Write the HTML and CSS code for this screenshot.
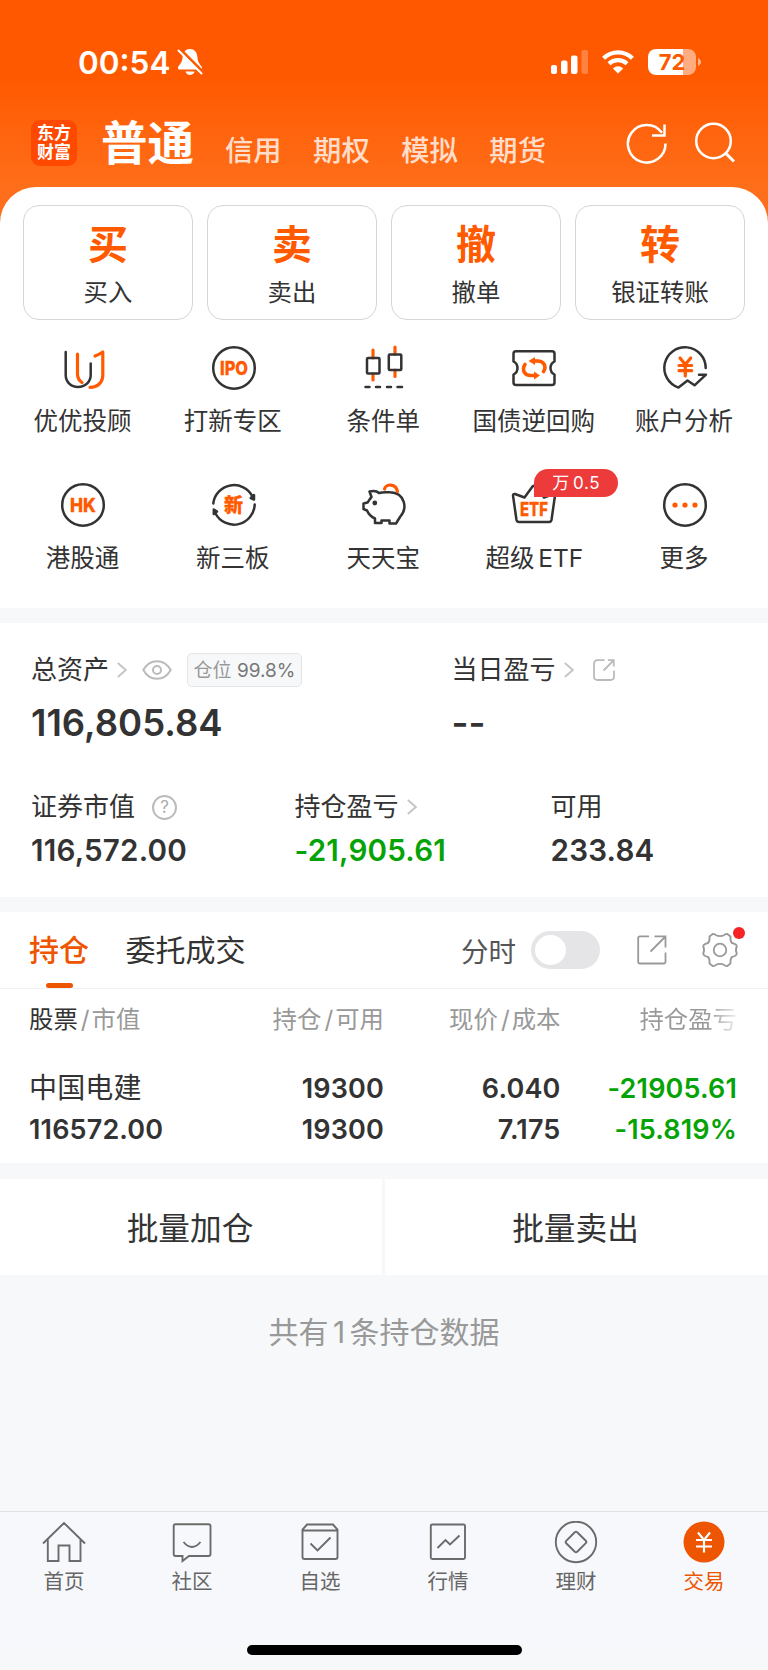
FILE: index.html
```html
<!DOCTYPE html>
<html lang="zh-CN">
<head>
    <meta charset="UTF-8">
    <meta name="viewport" content="width=device-width, initial-scale=1.0">
    <title>交易 - 普通</title>
    <link rel="stylesheet" href="styles.css">
</head>
<body>
    <div class="top">
        <div class="status-bar">
            <span class="time">00:54</span>
            <svg class="bell" width="26" height="28" viewBox="0 0 26 28">
                <path d="M13 1C8.500 1 6 4 5.600 9C5.300 14 3.500 15.500 1.300 18.500C.500 20 1 21.500 2.500 21.500H23.500C25 21.500 25.500 20 24.500 18.500C22.500 15.500 20.700 14 20.400 9C20 4 17.500 1 13 1Z" fill="#fff"/>
                <path d="M8.500 23.500H17.500C16.500 28 9.500 28 8.500 23.500Z" fill="#fff"/>
                <path d="M3 1L27 25" stroke="#ff5900" stroke-width="3"/>
                <path d="M1.500 2.500L24.500 25.500" stroke="#fff" stroke-width="2" stroke-linecap="round"/>
            </svg>
            <svg class="signal" width="38" height="24" viewBox="0 0 38 24">
                <rect x="0" y="15" width="6" height="9" rx="2" fill="#fff"/>
                <rect x="10" y="10.500" width="6.500" height="13.500" rx="2" fill="#fff"/>
                <rect x="20" y="5.500" width="6.500" height="18.500" rx="2" fill="#fff"/>
                <rect x="30.500" y="0" width="6.500" height="24" rx="2" fill="#fff" fill-opacity=".25"/>
            </svg>
            <svg class="wifi" width="32" height="24" viewBox="0 0 32 24">
                <path d="M1.600 8.300A20.500 20.500 0 0 1 30.400 8.300" fill="none" stroke="#fff" stroke-width="4.200"/>
                <path d="M7 13.800A13 13 0 0 1 25 13.800" fill="none" stroke="#fff" stroke-width="4.200"/>
                <path d="M16 23.300L11.200 18.500A7 7 0 0 1 20.800 18.500Z" fill="#fff" stroke="#fff" stroke-width=".6" stroke-linejoin="round"/>
            </svg>
            <div class="battery"><span>72</span></div>
            <svg class="battery-nub" width="3" height="8" viewBox="0 0 3 8">
                <path d="M0 0C4 1.500 4 6.500 0 8Z" fill="#fff" fill-opacity=".55"/>
            </svg>
        </div>

        <div class="nav">
            <div class="logo"><span>东方</span><span>财富</span></div>
            <h1>普通</h1>
            <ul class="nav-links">
                <li>信用</li>
                <li>期权</li>
                <li>模拟</li>
                <li>期货</li>
            </ul>
            <svg class="refresh" width="42" height="42" viewBox="0 0 42 42" fill="none" stroke="#fff" stroke-width="2.500">
                <path d="M39.500 21.500A18.800 18.800 0 1 1 36 10.800"/>
                <path d="M38.500 2.500V13.500H26"/>
            </svg>
            <svg class="search" width="42" height="42" viewBox="0 0 42 42" fill="none" stroke="#fff" stroke-width="2.500">
                <circle cx="19.500" cy="19" r="17.300"/>
                <path d="M31.500 31L40 39.500" stroke-width="3"/>
            </svg>
        </div>

        <div class="panel">
            <div class="actions">
                <div class="action"><b>买</b><span>买入</span></div>
                <div class="action"><b>卖</b><span>卖出</span></div>
                <div class="action"><b>撤</b><span>撤单</span></div>
                <div class="action"><b>转</b><span>银证转账</span></div>
            </div>

            <div class="tools">
                <div class="tool">
                    <svg width="48" height="48" viewBox="0 0 48 48">
                        <path d="M6.700 8V31C6.700 38 12 43 19 43C26 43 31.700 38 31.700 31V19.500" class="line"/>
                        <path d="M18.500 10V30C18.500 34 20 36.500 23 38.500" class="line hot"/>
                        <path d="M36 12C39 11 41.500 9.500 43.800 8V31C43.800 38.500 38.500 43.300 31 43.300" class="line hot"/>
                    </svg>
                    <span>优优投顾</span>
                </div>
                <div class="tool">
                    <svg width="48" height="48" viewBox="0 0 48 48">
                        <circle cx="24" cy="24" r="20.800" class="line"/>
                        <text x="24" y="30.800" textLength="28" lengthAdjust="spacingAndGlyphs" class="icon-text">IPO</text>
                    </svg>
                    <span>打新专区</span>
                </div>
                <div class="tool">
                    <svg width="48" height="48" viewBox="0 0 48 48">
                        <path d="M13 6V14M13 30V36M35 3V10M35 26V32.500" class="line hot"/>
                        <rect x="7" y="14" width="12.500" height="15.500" rx="1" class="line"/>
                        <rect x="28.800" y="10.500" width="12.500" height="15.500" rx="1" class="line"/>
                        <path d="M5.500 43H9.500M16 43H20M27 43H31M37.500 43H42" class="line"/>
                    </svg>
                    <span>条件单</span>
                </div>
                <div class="tool">
                    <svg width="48" height="48" viewBox="0 0 48 48">
                        <path d="M6 7.300H42Q44.500 7.300 44.500 9.800V17.500Q40.500 19.500 40.500 24Q40.500 28.500 44.500 30.500V38.500Q44.500 41 42 41H6Q3.500 41 3.500 38.500V30.500Q7.500 28.500 7.500 24Q7.500 19.500 3.500 17.500V9.800Q3.500 7.300 6 7.300Z" class="line"/>
                        <path d="M15 20.500C11.500 26 14.500 31.500 21 31.500H25" class="line hot bold"/>
                        <path d="M33.500 27.500C37 22 33.500 17 27.500 17H24" class="line hot bold"/>
                        <path d="M24 27.500V35.500L30 31.500ZM25 13V21L18.500 17Z" class="fill-hot"/>
                    </svg>
                    <span>国债逆回购</span>
                </div>
                <div class="tool">
                    <svg width="48" height="48" viewBox="0 0 48 48">
                        <path d="M44.700 24A20.700 20.700 0 1 0 17.500 43.600L26.500 36.500L33.500 41.300L45 30.700H38" class="line"/>
                        <path d="M19 14L24.300 20.500L29.700 14M24.300 20.500V32M18 21.500H30.700M18 26.700H30.700" class="line hot"/>
                    </svg>
                    <span>账户分析</span>
                </div>
                <div class="tool">
                    <svg width="48" height="48" viewBox="0 0 48 48">
                        <circle cx="24" cy="24" r="20.800" class="line"/>
                        <text x="24" y="30.800" textLength="26" lengthAdjust="spacingAndGlyphs" class="icon-text">HK</text>
                    </svg>
                    <span>港股通</span>
                </div>
                <div class="tool">
                    <svg width="48" height="48" viewBox="0 0 48 48">
                        <path d="M3.300 22.500A20.800 20.800 0 0 1 42.500 15.500M44.700 23.500A20.800 20.800 0 0 1 5.500 32.500" class="line"/>
                        <path d="M44 14V18.500L40.800 17ZM3.800 33V28.500L7 30.500Z" class="line fill-dark"/>
                        <text x="23.500" y="30.800" class="icon-text">新</text>
                    </svg>
                    <span>新三板</span>
                </div>
                <div class="tool">
                    <svg width="48" height="48" viewBox="0 0 48 48">
                        <path d="M19 12C17 10 13.500 9.500 9.500 10.500L11.500 16C9.500 18 9 20 7.500 21.500L3.500 22.500V28L7 29.500C8.500 33 11.500 36 15 37.500V42H21.500V39.500H29.500V42.500H36L40 36C48 27 45 12 30 11.300C26 11 22 11 19 12Z" class="line"/>
                        <circle cx="14.800" cy="22" r="2.400" class="fill-dark"/>
                        <path d="M24.500 8C26 2.300 36 2.300 37.500 10.500" class="line hot"/>
                    </svg>
                    <span>天天宝</span>
                </div>
                <div class="tool">
                    <svg width="48" height="48" viewBox="0 0 48 48">
                        <path d="M3 14.500Q3 12.500 5 13L14.500 16.500L22.500 5.500Q24 4 25.500 5.500L34 16.500L43 13Q45 12.500 45 14.500L41.500 39Q41 41 39 41H9Q7 41 6.500 39Z" class="line"/>
                        <text x="24" y="34.500" textLength="28" lengthAdjust="spacingAndGlyphs" class="icon-text">ETF</text>
                    </svg>
                    <em class="badge">万 0.5</em>
                    <span class="latin">超级 ETF</span>
                </div>
                <div class="tool">
                    <svg width="48" height="48" viewBox="0 0 48 48">
                        <circle cx="24" cy="24" r="20.800" class="line"/>
                        <circle cx="14" cy="24" r="2.600" class="fill-hot"/>
                        <circle cx="24" cy="24" r="2.600" class="fill-hot"/>
                        <circle cx="34" cy="24" r="2.600" class="fill-hot"/>
                    </svg>
                    <span>更多</span>
                </div>
            </div>
        </div>
    </div>

    <div class="assets">
        <div class="assets-main">
            <div class="asset">
                <div class="label">
                    总资产
                    <svg class="chevron" width="10" height="16" viewBox="0 0 10 16"><path d="M.800 1L8.800 8L.800 15"/></svg>
                    <svg class="eye" width="30" height="22" viewBox="0 0 30 22" fill="none" stroke="#bbb" stroke-width="2">
                        <path d="M1.300 11C8 -.800 22 -.800 28.700 11C22 22.800 8 22.800 1.300 11Z"/>
                        <circle cx="15" cy="11" r="4"/>
                    </svg>
                    <span class="position">仓位 <i>99.8%</i></span>
                </div>
                <div class="value">116,805.84</div>
            </div>
            <div class="asset">
                <div class="label">
                    当日盈亏
                    <svg class="chevron" width="10" height="16" viewBox="0 0 10 16"><path d="M.800 1L8.800 8L.800 15"/></svg>
                    <svg class="share" width="22" height="22" viewBox="0 0 22 22" fill="none" stroke="#bbb" stroke-width="1.800">
                        <path d="M11.500 1.200H4.500Q1 1.200 1 4.700V17.500Q1 21 4.500 21H17.500Q21 21 21 17.500V11.500M10.500 11.500L20.500 1.500M15 1.200H20.800V7.500"/>
                    </svg>
                </div>
                <div class="value">--</div>
            </div>
        </div>
        <div class="assets-sub">
            <div class="asset">
                <div class="label">
                    证券市值
                    <span class="help">?</span>
                </div>
                <div class="value">116,572.00</div>
            </div>
            <div class="asset">
                <div class="label">
                    持仓盈亏
                    <svg class="chevron" width="10" height="16" viewBox="0 0 10 16"><path d="M.800 1L8.800 8L.800 15"/></svg>
                </div>
                <div class="value down">-21,905.61</div>
            </div>
            <div class="asset">
                <div class="label">可用</div>
                <div class="value">233.84</div>
            </div>
        </div>
    </div>

    <div class="holdings">
        <div class="tabs">
            <span class="tab active">持仓</span>
            <span class="tab">委托成交</span>
            <span class="switch-label">分时</span>
            <span class="switch"></span>
            <svg class="export" width="30" height="30" viewBox="0 0 30 30" fill="none" stroke="#999" stroke-width="1.800">
                <path d="M12 1.300H3Q1.200 1.300 1.200 3V27Q1.200 28.500 3 28.500H27Q28.500 28.500 28.500 27V17.500M13.500 16.500L28 2M17.500 1.300H28.500V12.500"/>
            </svg>
            <span class="settings">
                <svg width="36" height="36" viewBox="0 0 36 36" fill="none" stroke="#999" stroke-width="1.800">
                    <path d="M11 1.800Q13 1.800 14 3.200Q18 5 22 3.200Q23 1.800 25 1.800L28.500 4.500Q28 9 30 11Q34.500 12 34.800 14.500Q33 18 34.800 21.500Q34.500 24 30 25Q28 27 28.500 31.500L25 34.200Q23 34.200 22 32.800Q18 31 14 32.800Q13 34.200 11 34.200L7.500 31.500Q8 27 6 25Q1.500 24 1.200 21.500Q3 18 1.200 14.500Q1.500 12 6 11Q8 9 7.500 4.500Z" stroke-linejoin="round"/>
                    <circle cx="18" cy="18" r="6.300"/>
                </svg>
            </span>
        </div>
        <table>
            <thead>
                <tr>
                    <th><strong>股票</strong><s>/</s>市值</th>
                    <th>持仓<s>/</s>可用</th>
                    <th>现价<s>/</s>成本</th>
                    <th><span class="fade">持仓盈亏</span></th>
                </tr>
            </thead>
            <tbody>
                <tr>
                    <td><span class="stock">中国电建</span>116572.00</td>
                    <td>19300<br>19300</td>
                    <td>6.040<br>7.175</td>
                    <td class="down">-21905.61<br>-15.819%</td>
                </tr>
            </tbody>
        </table>
    </div>

    <div class="batch">
        <div class="batch-btn">批量加仓</div>
        <div class="batch-btn">批量卖出</div>
    </div>
    <p class="total">共有<span>1</span>条持仓数据</p>

    <div class="tabbar">
        <div class="tabbar-item">
            <svg width="44" height="44" viewBox="0 0 44 44">
                <path d="M1 22.500L22 2L43 22.500M5.800 18.500V40H16.500V24.500H27.500V40H38.500V18.500"/>
            </svg>
            首页
        </div>
        <div class="tabbar-item">
            <svg width="44" height="44" viewBox="0 0 44 44">
                <path d="M5.500 3.200H38.500Q40.500 3.200 40.500 5.200V33Q40.500 35 38.500 35H19L12.500 40V35H5.500Q3.700 35 3.700 33V5.200Q3.700 3.200 5.500 3.200Z"/>
                <path d="M13.500 21Q22 31 30.500 21"/>
            </svg>
            社区
        </div>
        <div class="tabbar-item">
            <svg width="44" height="44" viewBox="0 0 44 44">
                <path d="M9 3.500H35L39.500 8.500V36Q39.500 38 37.500 38H6.500Q4.500 38 4.500 36V8.500ZM4.500 9.500H39.500"/>
                <path d="M12.500 22.500L19.500 29.500L32.500 16.500"/>
            </svg>
            自选
        </div>
        <div class="tabbar-item">
            <svg width="44" height="44" viewBox="0 0 44 44">
                <rect x="4.800" y="3.500" width="34.200" height="34.500" rx="1.500"/>
                <path d="M11.500 27L19.500 19L24 23.500L33.500 14.500"/>
            </svg>
            行情
        </div>
        <div class="tabbar-item">
            <svg width="44" height="44" viewBox="0 0 44 44">
                <circle cx="22" cy="21" r="20.200"/>
                <path d="M20.800 11.300Q22 10 23.200 11.300L31.800 19.800Q33 21 31.800 22.200L23.200 30.700Q22 32 20.800 30.700L12.200 22.200Q11 21 12.200 19.800Z"/>
            </svg>
            理财
        </div>
        <div class="tabbar-item active">
            <svg width="44" height="44" viewBox="0 0 44 44">
                <circle cx="22" cy="21" r="20.500" class="dot"/>
                <path d="M16 11.500L22 19L28 11.500M22 19V31.500M14 19H30M14 25.500H30" class="yen"/>
            </svg>
            交易
        </div>
    </div>
    <div class="home-indicator"></div>
</body>
</html>
```
FILE: styles.css
```css
* {
    box-sizing: border-box;
}
body {
    margin: 0;
    width: 768px;
    height: 1670px;
    overflow: hidden;
    display: flex;
    flex-direction: column;
    background-color: #f7f8fa;
    color: #333;
    font-family: Inter, "Noto Sans CJK SC", sans-serif;
}
svg {
    display: block;
    flex: none;
}

/* header */
.top {
    height: 608px;
    background: linear-gradient(#ff5800 0, #ff5900 75px, #ff6e1a 187px, #ff6e1a 100%);
}
.status-bar {
    display: flex;
    align-items: center;
    height: 76px;
    padding: 48px 0 0 78px;
}
.time {
    width: 92px;
    margin-top: 2px;
    color: #fff;
    font-size: 31.5px;
    line-height: 28px;
    font-weight: 600;
}
.bell {
    margin-left: 7px;
}
.signal {
    margin-left: 348px;
}
.wifi {
    margin-left: 13px;
}
.battery {
    width: 48px;
    height: 26px;
    margin-left: 14px;
    border-radius: 8px;
    background: linear-gradient(90deg, #fff 72%, rgba(255,255,255,0.5) 72%);
    color: #ff5900;
    font-size: 22px;
    line-height: 27px;
    font-weight: 700;
    text-align: center;
}
.battery-nub {
    margin-left: 2px;
}
.nav {
    display: flex;
    align-items: center;
    height: 111px;
    padding: 24px 0 9px 31px;
}
.logo {
    display: flex;
    flex-direction: column;
    justify-content: center;
    width: 46px;
    height: 46px;
    margin-top: 8px;
    border-radius: 9px;
    background-color: #ff4800;
    color: #fff;
    font-size: 17px;
    line-height: 19px;
    font-weight: 700;
    text-align: center;
}
.nav h1 {
    margin: 8px 0 0 24px;
    color: #fff;
    font-size: 46.5px;
    line-height: 50px;
    font-weight: 700;
}
.nav-links {
    display: flex;
    gap: 31.5px;
    margin: 24px 0 0 31px;
    padding: 0;
    list-style: none;
    color: rgba(255,255,255,0.8);
    font-size: 28.3px;
    line-height: 32px;
    font-weight: 500;
}
.refresh {
    margin: 7px 0 0 80.5px;
}
.search {
    margin: 7px 0 0 25.5px;
}
.panel {
    height: 421px;
    padding: 18px 0 0;
    border-radius: 36px 36px 0 0;
    background-color: #fff;
}

/* quick actions */
.actions {
    display: grid;
    grid-template-columns: repeat(4, 1fr);
    gap: 14px;
    padding: 0 23px;
}
.action {
    display: flex;
    flex-direction: column;
    align-items: center;
    height: 115px;
    padding-top: 18px;
    border: 1px solid #d6d6d6;
    border-radius: 16px;
}
.action b {
    color: #ff5a00;
    font-size: 40px;
    line-height: 42px;
    font-weight: 700;
}
.action span {
    margin-top: 10px;
    font-size: 24.4px;
    line-height: 32px;
}
.tools {
    display: grid;
    grid-template-columns: repeat(5, 1fr);
    grid-auto-rows: 137px;
    padding: 24px 8px 0;
}
.tool {
    position: relative;
    display: flex;
    flex-direction: column;
    align-items: center;
    white-space: nowrap;
}
.tool span {
    margin-top: 11.5px;
    padding-right: 1.5px;
    font-size: 24.5px;
    line-height: 34px;
}
.tool .latin {
    padding-right: 0;
    word-spacing: -3px;
}
.line {
    fill: none;
    stroke: #333;
    stroke-width: 2.5;
    stroke-linecap: round;
    stroke-linejoin: round;
}
.line.hot {
    stroke: #ff5a00;
    stroke-width: 3.2;
}
.line.bold {
    stroke-width: 3.6;
}
.fill-hot {
    fill: #ff5a00;
}
.fill-dark {
    fill: #333;
}
.icon-text {
    fill: #ff5a00;
    stroke: #ff5a00;
    stroke-width: 0.3;
    font-size: 19px;
    font-weight: 800;
    text-anchor: middle;
}
.badge {
    position: absolute;
    top: -12px;
    left: 75px;
    width: 84px;
    height: 28px;
    border-radius: 14px 14px 14px 0;
    background-color: #ed3b3b;
    color: #fff;
    font-size: 17px;
    line-height: 29px;
    font-style: normal;
    letter-spacing: 0.6px;
    word-spacing: -2px;
    text-align: center;
}

/* assets */
.assets {
    height: 274px;
    margin-top: 15px;
    padding: 29px 31px 0;
    background-color: #fff;
}
.assets-main {
    display: grid;
    grid-template-columns: 420.5px 1fr;
}
.assets-sub {
    display: grid;
    grid-template-columns: 263.5px 256px 1fr;
    margin-top: 45px;
}
.label {
    display: flex;
    align-items: center;
    height: 36px;
    font-size: 26px;
    line-height: 36px;
    white-space: nowrap;
}
.chevron {
    margin-left: 8px;
    fill: none;
    stroke: #c4c4c4;
    stroke-width: 1.8;
}
.eye {
    margin-left: 15px;
}
.position {
    width: 115px;
    height: 34px;
    margin-left: 15px;
    border: 1px solid #e3e4e6;
    border-radius: 5px;
    background-color: #f7f8fa;
    color: #999;
    font-size: 19px;
    line-height: 34px;
    text-align: center;
}
.position i {
    color: #777;
    font-style: normal;
}
.share {
    margin-left: 19px;
}
.help {
    width: 25px;
    height: 25px;
    margin-left: 17px;
    border: 2px solid #bbb;
    border-radius: 50%;
    color: #aaa;
    font-size: 17px;
    line-height: 21px;
    text-align: center;
}
.assets-main .value {
    margin-top: 14px;
    font-size: 36.5px;
    line-height: 42px;
    font-weight: 600;
}
.assets-sub .value {
    margin-top: 7px;
    font-size: 29.6px;
    line-height: 36px;
    font-weight: 600;
    letter-spacing: 0.2px;
}
.down,
.assets .down {
    color: #05a305;
}

/* holdings */
.holdings {
    height: 251px;
    margin-top: 15px;
    background-color: #fff;
}
.tabs {
    display: flex;
    align-items: center;
    height: 77px;
    padding-left: 29px;
    border-bottom: 1px solid #f1f2f4;
}
.tab {
    position: relative;
    margin-right: 36.5px;
    font-size: 30px;
    line-height: 76px;
}
.tab.active {
    color: #ee5500;
    font-weight: 500;
}
.tab.active::after {
    content: "";
    position: absolute;
    left: 17px;
    bottom: 0;
    width: 27px;
    height: 5px;
    border-radius: 2.5px;
    background-color: #ee5500;
}
.switch-label {
    margin-left: 179px;
    color: #555;
    font-size: 27.5px;
}
.switch {
    width: 69px;
    height: 38px;
    margin-left: 15px;
    padding: 4px;
    border-radius: 19px;
    background-color: #e5e5e7;
}
.switch::before {
    content: "";
    display: block;
    width: 31px;
    height: 30px;
    border-radius: 50%;
    background-color: #fff;
}
.export {
    margin-left: 36.5px;
}
.settings {
    position: relative;
    margin-left: 35.5px;
}
.settings::after {
    content: "";
    position: absolute;
    top: -5px;
    left: 30.5px;
    width: 12px;
    height: 12px;
    border-radius: 50%;
    background-color: #f52323;
}
table {
    width: 737px;
    table-layout: fixed;
    border-collapse: collapse;
}
th,
td {
    padding: 0;
    text-align: right;
    white-space: nowrap;
}
th:first-child,
td:first-child {
    width: 200px;
    padding-left: 29px;
    text-align: left;
}
th:nth-child(2) {
    width: 184px;
}
th:nth-child(3) {
    width: 176.5px;
}
th {
    height: 64px;
    padding-bottom: 7px;
    color: #999;
    font-size: 24.4px;
    font-weight: 400;
}
th strong {
    color: #333;
    font-weight: 400;
}
th s {
    margin: 0 2px 0 3px;
    text-decoration: none;
}
.fade {
    background: linear-gradient(90deg, #999 70%, #eee 100%);
    -webkit-background-clip: text;
    background-clip: text;
    color: transparent;
}
td {
    padding-top: 15px;
    font-size: 27px;
    line-height: 41px;
    font-weight: 600;
    letter-spacing: 0.15px;
}
.stock {
    display: block;
    font-size: 28px;
    font-weight: 400;
}

/* batch buttons */
.batch {
    display: grid;
    grid-template-columns: 382px 1fr;
    gap: 3px;
    margin-top: 16px;
}
.batch-btn {
    height: 96px;
    padding-right: 2px;
    background-color: #fff;
    font-size: 31.7px;
    line-height: 99px;
    text-align: center;
}
.total {
    margin: 37px 0 0;
    color: #999;
    font-size: 30px;
    line-height: 40px;
    text-align: center;
}
.total span {
    margin: 0 4.5px;
}

/* bottom tab bar */
.tabbar {
    display: grid;
    grid-template-columns: repeat(6, 1fr);
    height: 134px;
    margin-top: auto;
    padding-top: 9px;
    border-top: 1px solid #e2e3e5;
    background-color: #f7f8fb;
}
.tabbar-item {
    display: flex;
    flex-direction: column;
    align-items: center;
    gap: 2px;
    color: #666;
    font-size: 20.5px;
    line-height: 30px;
}
.tabbar-item svg {
    fill: none;
    stroke: #6b6b6b;
    stroke-width: 1.9;
}
.tabbar-item.active {
    color: #ee5500;
}
.tabbar-item .dot {
    fill: #ee5500;
    stroke: none;
}
.tabbar-item .yen {
    stroke: #fff;
    stroke-width: 2.2;
}
.home-indicator {
    flex: none;
    width: 275px;
    height: 10px;
    margin: 0 auto 15px;
    border-radius: 5px;
    background-color: #000;
}
```
